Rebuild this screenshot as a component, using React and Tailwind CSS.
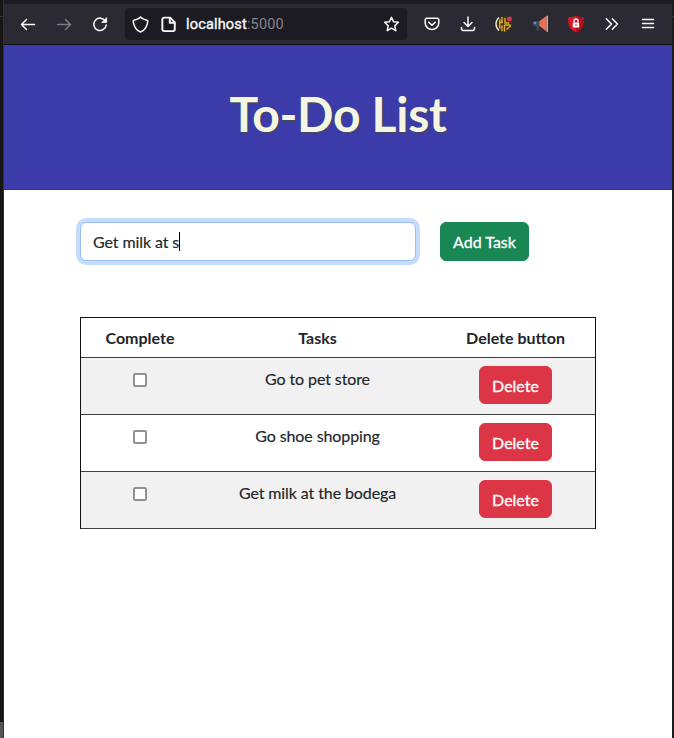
import React from "react";

const tasks = ["Go to pet store", "Go shoe shopping", "Get milk at the bodega"];

function Slot({ children, className = "" }) {
  return <div className={`flex h-8 w-9 shrink-0 items-center justify-center ${className}`}>{children}</div>;
}

function Line({ children, size = 16, width = 1.5, className = "" }) {
  return (
    <svg
      width={size}
      height={size}
      viewBox="0 0 16 16"
      fill="none"
      stroke="currentColor"
      strokeWidth={width}
      strokeLinecap="round"
      strokeLinejoin="round"
      className={className}
    >
      {children}
    </svg>
  );
}

function Toolbar() {
  return (
    <div className="flex h-[41px] items-center border-b border-[#0f0f18] bg-[#2b2a33] pl-1.5 text-[#fbfbfe]">
      <Slot><Line><path d="M14.5 8.500H1.500M6.500 3.500L1.500 8.500L6.500 13.500" /></Line></Slot>
      <Slot className="text-[#7c7b82]"><Line><path d="M1.500 8.500h13M9.500 3.500L14.500 8.500L9.500 13.500" /></Line></Slot>
      <Slot>
        <Line>
          <path d="M13.4 5.2A6.200 6.200 0 1 0 14.200 9" />
          <path d="M14.6 2v4.500H10.100z" fill="currentColor" strokeWidth="0.8" />
        </Line>
      </Slot>
      <div className="mx-[7px] flex h-8 w-[282px] shrink-0 items-center rounded bg-[#1c1b22] pl-[7px] pr-[7px]">
        <Line width={1.4} size={17}><path d="M8 .900C6.500 2.600 4.200 3.300 1.300 4.200C1 6.300 1.500 7.300 2 8.500C3 11.500 4.800 14 8 15C11.200 14 13 11.500 14 8.500C14.500 7.300 15 6.300 14.700 4.200C11.800 3.300 9.500 2.600 8 .900Z" /></Line>
        <Line width={1.8} size={17} className="ml-[11px]">
          <path d="M2.200 3v9.500a1.700 1.700 0 0 0 1.700 1.700h8.300a1.700 1.700 0 0 0 1.700-1.700V6L9.500 1.500H3.900A1.700 1.700 0 0 0 2.200 3.200" />
          <path d="M9.200 1.800V6.300h4.500" />
        </Line>
        <span className="ml-[9px] pt-0.5 font-['Roboto',sans-serif] text-[14.500px] leading-5 tracking-[0.180px] whitespace-nowrap">
          <span className="[-webkit-text-stroke:0.350px_#fbfbfe]">localhost</span><span className="text-[#85848b]">:5000</span>
        </span>
        <Line width={1.4} size={17} className="ml-auto"><path d="M8 1.200l1.900 4.200 4.600.500-3.400 3.200.900 4.700L8 11.500l-4 2.300.900-4.700L1.500 5.900l4.600-.500z" /></Line>
      </div>
      <Slot>
        <Line>
          <path d="M2.700 2.200h10.600a1.500 1.500 0 0 1 1.500 1.500V7a6.800 6.500 0 0 1-13.600 0V3.700a1.500 1.500 0 0 1 1.500-1.500z" />
          <path d="M4.800 6.200L8 9.300l3.200-3.100" />
        </Line>
      </Slot>
      <Slot><Line><path d="M8 1v9.300M4 6.500l4 4 4-4M1.500 11.500v1.300a1.700 1.700 0 0 0 1.700 1.700h9.600a1.700 1.700 0 0 0 1.700-1.700v-1.300" /></Line></Slot>
      <Slot>
        <svg width="18" height="18" viewBox="0 0 18 18">
          <circle cx="9.500" cy="9" r="8" fill="#403417" />
          <path d="M4 2.500C0 6 0 12 4 15.500" fill="none" stroke="#f1ead4" strokeWidth="1.400" />
          <path d="M4.800 4.500v9M7 2v5.500H4M7 10.500v5.500M10 3v5h4M9.500 10h6M9.500 10v6.500M11.500 14.500l4.500-4" fill="none" stroke="#e0ad36" strokeWidth="1.400" />
          <circle cx="14.500" cy="4" r="2.400" fill="#d93c45" />
        </svg>
      </Slot>
      <Slot>
        <svg width="18" height="18" viewBox="0 0 18 18">
          <path d="M4 10h3.500l1 5.500H6z" fill="#34495e" />
          <path d="M4 6h5v5H4a2.500 2.500 0 0 1 0-5z" fill="#34506a" />
          <path d="M8.500 6L15.500 1v15.500L8.500 11z" fill="#ed704f" />
          <path d="M15.500 1l1.500-.5v16.500L15.500 16.500z" fill="#d5a799" />
          <circle cx="4" cy="8" r="1.200" fill="#6792af" />
        </svg>
      </Slot>
      <Slot>
        <svg width="18" height="18" viewBox="0 0 18 18">
          <path d="M9 .500C11.500 2 14 2.300 16.800 2.500C17 10 15.500 14.500 9 17.600C2.500 14.500 1 10 1.200 2.500C4 2.300 6.500 2 9 .500z" fill="#db1625" />
          <path d="M9 .500C11.500 2 14 2.300 16.800 2.500C17 10 15.500 14.500 9 17.600z" fill="#b30f1d" />
          <rect x="5.800" y="7.500" width="6.400" height="5" rx=".6" fill="#fff" />
          <path d="M7 7.500V6a2 2 0 0 1 4 0v1.500" fill="none" stroke="#fff" strokeWidth="1.300" />
          <path d="M9 9v2" stroke="#d21b28" strokeWidth="1" />
        </svg>
      </Slot>
      <Slot><Line><path d="M2.300 2.800L7.500 8l-5.200 5.200M8.300 2.800L13.500 8l-5.200 5.200" /></Line></Slot>
      <Slot><Line><path d="M2.500 3.500h11M2.500 7.500h11M2.500 11.500h11" /></Line></Slot>
    </div>
  );
}

export default function App() {
  return (
    <div className="flex h-[738px] w-[674px] overflow-hidden bg-[#17161a] font-['Lato',sans-serif] text-base leading-6 text-[#212529]">
      <div className="flex w-1 shrink-0 flex-col justify-between border-r border-[#303036] bg-[#171615] pt-4">
        <span className="h-px bg-[#333335]" />
        <span className="h-4 bg-[#555555]" />
      </div>
      <div className="flex w-[668px] shrink-0 flex-col bg-white">
        <div className="h-1 bg-[#1c1b22]" />
        <Toolbar />
        <header className="flex h-[145px] items-start justify-center border-b border-[#30309a] bg-[#3b3ba9] pt-10">
          <h1 className="text-[48px] font-bold leading-[58px] tracking-[-0.300px] text-[#f5f5e4] [text-shadow:1px_1px_1px_#4b4b55]">To-Do List</h1>
        </header>
        <main className="px-[76px] pt-8">
          <form className="flex h-[39px] items-start gap-6" onSubmit={(e) => e.preventDefault()}>
            <div className="flex h-[39px] w-[336px] items-center rounded-md border border-[#98bff5] bg-white px-3 ring-4 ring-[#c5dcff]">
              <span className="whitespace-pre tracking-[-0.100px] [-webkit-text-stroke:0.150px_#212529]">Get milk at s</span>
              <span className="h-[19px] w-px bg-black" />
            </div>
            <button className="h-[39px] w-[89px] rounded-md border border-[#198754] bg-[#198754] text-white whitespace-nowrap [-webkit-text-stroke:0.300px_#ffffff]">Add Task</button>
          </form>
          <div className="mt-[56px] w-[516px] border-x border-t border-[#101010] text-center">
            <div className="grid h-10 grid-cols-[118px_237px_159px] items-center border-b border-[#404040] pt-px font-bold">
              <span>Complete</span>
              <span>Tasks</span>
              <span>Delete button</span>
            </div>
            {tasks.map((task, i) => (
              <div
                key={task}
                className={`grid h-[57px] grid-cols-[118px_237px_159px] items-start border-b border-[#404040] pt-2 ${i % 2 === 0 ? "bg-[#f1f1f1]" : "bg-white"}`}
              >
                <span className="flex justify-center pt-[7px]">
                  <input type="checkbox" className="size-[14px] appearance-none rounded-[2px] border-2 border-[#909096] bg-white" />
                </span>
                <span className="pt-px tracking-[-0.100px] [-webkit-text-stroke:0.150px_#212529]">{task}</span>
                <span className="flex justify-center">
                  <button className="h-[38px] w-[73px] rounded-md border border-[#dc3545] bg-[#dc3545] pt-px text-white [-webkit-text-stroke:0.300px_#ffffff]">Delete</button>
                </span>
              </div>
            ))}
          </div>
        </main>
      </div>
      <div className="flex w-0.5 shrink-0 flex-col bg-[#1c1b20] pt-4">
        <span className="h-px bg-[#39393d]" />
      </div>
    </div>
  );
}
